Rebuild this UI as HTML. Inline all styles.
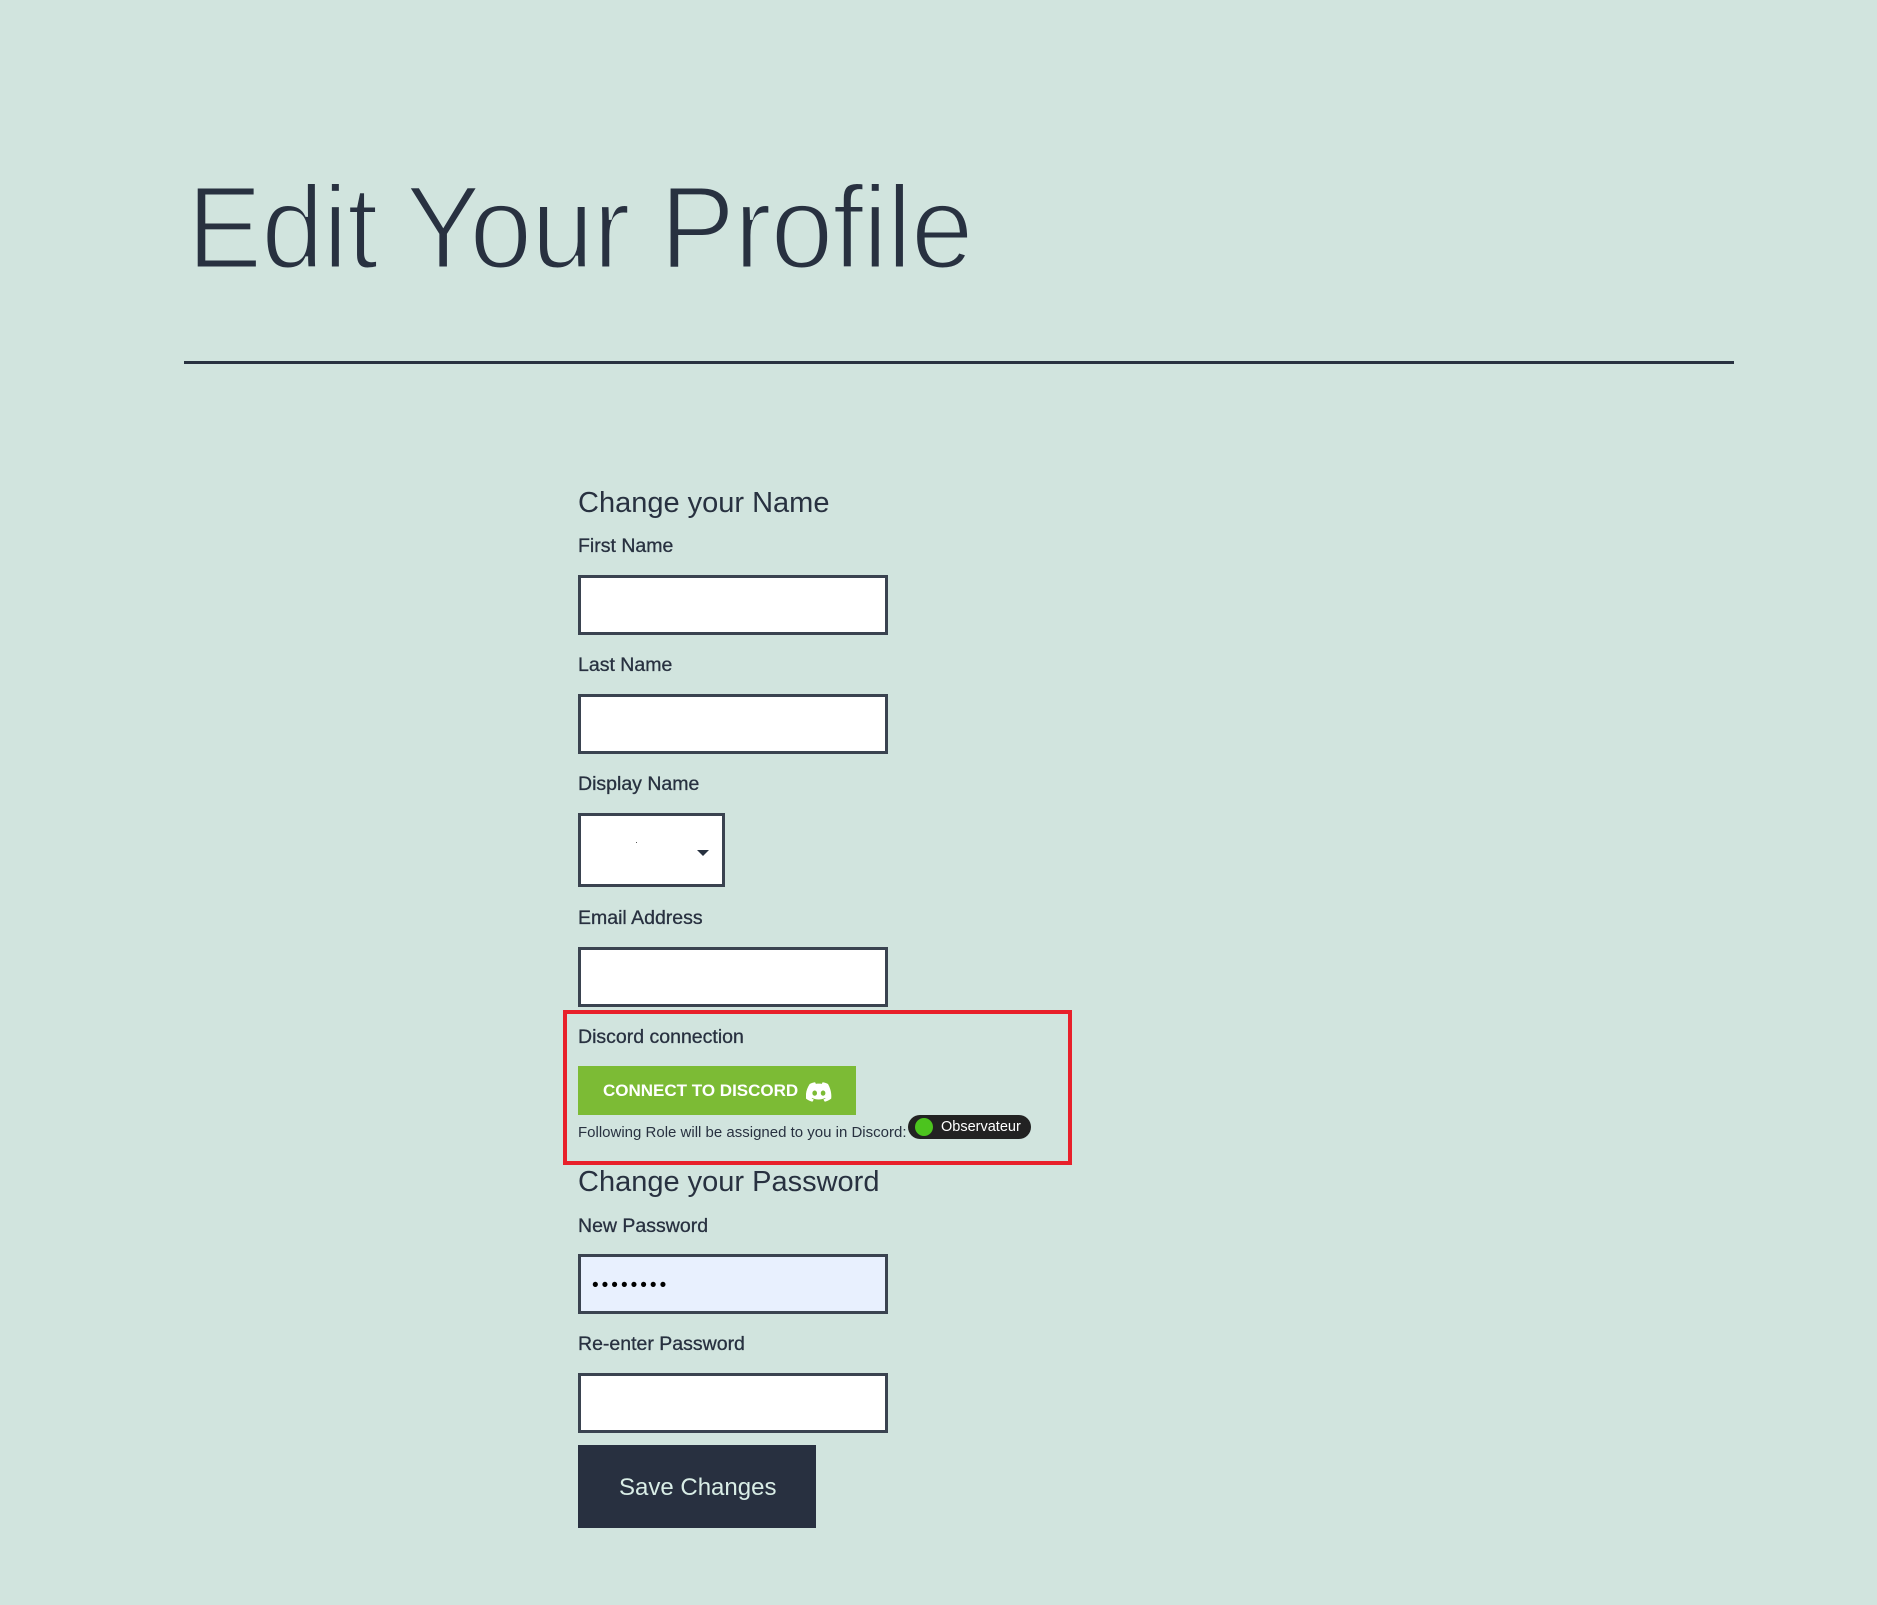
<!DOCTYPE html>
<html><head><meta charset="utf-8"><style>
html,body{margin:0;padding:0}
body{width:1877px;height:1605px;background:#d1e4de;position:relative;overflow:hidden;font-family:"Liberation Sans",sans-serif;color:#283140}
.a{position:absolute;line-height:1;white-space:nowrap}
.lbl{font-size:19.5px;color:#283140;-webkit-text-stroke:0.3px #283140}
.inp{position:absolute;left:578px;width:304px;height:54px;border:3px solid #3a4350;background:#fff}
</style></head><body>
<div class="a" style="left:187px;top:169px;font-size:118px;color:#283140;-webkit-text-stroke:3px #d1e4de;letter-spacing:-1px;transform:scaleX(0.955);transform-origin:0 0">Edit Your Profile</div>
<div style="position:absolute;left:184px;top:361px;width:1550px;height:3px;background:#283140"></div>

<div class="a" style="left:578px;top:489px;font-size:29px">Change your Name</div>
<div class="a lbl" style="left:578px;top:537px">First Name</div>
<div class="inp" style="top:575px"></div>
<div class="a lbl" style="left:578px;top:656px">Last Name</div>
<div class="inp" style="top:694px"></div>
<div class="a lbl" style="left:578px;top:775px">Display Name</div>
<div class="inp" style="top:813px;width:141px;height:68px"></div>
<div style="position:absolute;left:636px;top:842px;width:1px;height:1px;background:#555"></div>
<div style="position:absolute;left:697px;top:850px;width:0;height:0;border-left:6px solid transparent;border-right:6px solid transparent;border-top:6px solid #283140"></div>
<div class="a lbl" style="left:578px;top:909px">Email Address</div>
<div class="inp" style="top:947px"></div>

<div style="position:absolute;left:563px;top:1010px;width:501px;height:147px;border:4px solid #e8202a"></div>
<div class="a lbl" style="left:578px;top:1028px">Discord connection</div>
<div style="position:absolute;left:578px;top:1066px;width:278px;height:49px;background:#7cbb35"></div>
<div class="a" style="left:603px;top:1082px;font-size:17px;color:#fff;font-weight:bold">CONNECT TO DISCORD</div>
<svg style="position:absolute;left:806px;top:1082px" width="26" height="20" viewBox="0 0 26 20"><path fill="#fff" d="M22 2C20.3 1.2 18.5.6 16.6.3l-.8 1.6c-2-.3-4-.3-5.9 0L9.1.3C7.2.6 5.4 1.2 3.7 2 .4 7-.5 11.8 0 16.6 2.2 18.2 4.3 19.2 6.4 19.8L7.8 17.5C7 17.2 6.3 16.8 5.6 16.4l.5-.4c4.2 2 8.8 2 13 0l.5.4c-.7.4-1.4.8-2.2 1.1l1.4 2.3c2.1-.6 4.2-1.6 6.4-3.2.6-5.6-.9-10.4-3.2-14.6zM8.7 13.7c-1.3 0-2.3-1.2-2.3-2.6s1-2.6 2.3-2.6 2.3 1.2 2.3 2.6-1 2.6-2.3 2.6zm8.4 0c-1.3 0-2.3-1.2-2.3-2.6s1-2.6 2.3-2.6 2.3 1.2 2.3 2.6-1 2.6-2.3 2.6z"/></svg>
<div class="a" style="left:578px;top:1125px;font-size:15px;color:#283140">Following Role will be assigned to you in Discord:</div>
<div style="position:absolute;left:908px;top:1115px;width:123px;height:24px;border-radius:12px;background:#222"></div>
<div style="position:absolute;left:915px;top:1118px;width:18px;height:18px;border-radius:50%;background:#4cc41e"></div>
<div class="a" style="left:941px;top:1120px;font-size:14.5px;color:#fff">Observateur</div>

<div class="a" style="left:578px;top:1168px;font-size:29px">Change your Password</div>
<div class="a lbl" style="left:578px;top:1217px">New Password</div>
<div class="inp" style="top:1254px;background:#e8f0fe"></div>
<div class="a" style="left:592px;top:1276px;font-size:19px;color:#000;letter-spacing:3px">••••••••</div>
<div class="a lbl" style="left:578px;top:1335px">Re-enter Password</div>
<div class="inp" style="top:1373px"></div>
<div style="position:absolute;left:578px;top:1445px;width:238px;height:83px;background:#283040"></div>
<div class="a" style="left:619px;top:1476px;font-size:24px;color:#d9ede6">Save Changes</div>
</body></html>
